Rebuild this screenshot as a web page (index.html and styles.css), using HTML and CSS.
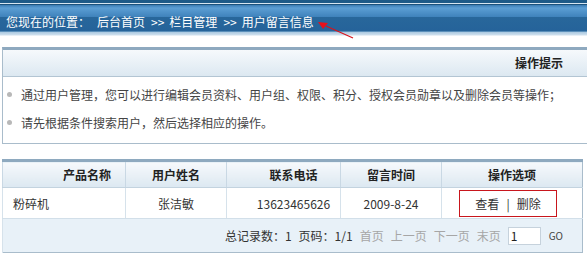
FILE: index.html
```html
<!DOCTYPE html>
<html lang="zh-CN">
<head>
  <meta charset="UTF-8" />
  <title>用户留言信息</title>
  <link rel="stylesheet" href="styles.css">
</head>
<body>
  <div class="topbar">
    <span class="crumb-label">您现在的位置：</span>
    <a class="crumb">后台首页</a>
    <span class="sep">&gt;&gt;</span>
    <a class="crumb">栏目管理</a>
    <span class="sep">&gt;&gt;</span>
    <a class="crumb">用户留言信息</a>
    <svg class="pointer" width="44" height="26" viewBox="0 0 44 26">
      <polygon points="2,5 12,6 7,12" fill="#e8101a" />
      <line x1="10" y1="9" x2="37" y2="21" stroke="#d8141c" stroke-width="1.2" />
    </svg>
  </div>

  <div class="tips">
    <div class="tips-head">操作提示</div>
    <ul class="tips-list">
      <li>通过用户管理，您可以进行编辑会员资料、用户组、权限、积分、授权会员勋章以及删除会员等操作；</li>
      <li>请先根据条件搜索用户，然后选择相应的操作。</li>
    </ul>
  </div>

  <table class="grid">
    <colgroup>
      <col class="w-name">
      <col class="w-user">
      <col class="w-phone">
      <col class="w-time">
      <col class="w-ops">
    </colgroup>
    <thead>
      <tr>
        <th class="col-name">产品名称</th>
        <th>用户姓名</th>
        <th class="col-phone">联系电话</th>
        <th>留言时间</th>
        <th>操作选项</th>
      </tr>
    </thead>
    <tbody>
      <tr>
        <td class="col-name">粉碎机</td>
        <td>张洁敏</td>
        <td class="col-phone">13623465626</td>
        <td>2009-8-24</td>
        <td><span class="ops-box"><a>查看</a><span class="bar">|</span><a>删除</a></span></td>
      </tr>
      <tr class="pager-row">
        <td colspan="5">
          <div class="pager">
            <span>总记录数：1</span>
            <span>页码：1/1</span>
            <span class="off">首页</span>
            <span class="off">上一页</span>
            <span class="off">下一页</span>
            <span class="off">末页</span>
            <input class="page-input" type="text" value="1">
            <span class="go">GO</span>
          </div>
        </td>
      </tr>
    </tbody>
  </table>
</body>
</html>
```

FILE: styles.css
```css
body {
  margin: 0;
  font-family: "Noto Sans CJK SC", "DejaVu Sans", sans-serif;
  font-size: 12px;
  color: #333;
  background: #fff;
  overflow: hidden;
}

.topbar {
  position: relative;
  height: 36px;
  display: flex;
  align-items: center;
  padding: 6px 0 0 6px;
  box-sizing: border-box;
  color: #fff;
  font-size: 12px;
  background: linear-gradient(to bottom,
    #1d5a88 0, #1d5a88 3px,
    #d6e6f2 3px, #d6e6f2 4px,
    #1b527d 4px, #1b527d 5px,
    #3a7cb4 5px, #5b9ed4 8px, #3f82bb 17px,
    #28679b 17px, #25639a 31px,
    #5a8fba 31px, #5a8fba 32px,
    #a9c8e0 32px, #cfe0ee 35px, #fff 36px);
}

.crumb-label {
  margin-right: 7px;
}

.crumb {
  color: #fff;
}

.sep {
  margin: 0 5px 0 6px;
}

.pointer {
  position: absolute;
  left: 316px;
  top: 17px;
}

.tips {
  margin: 11px -10px 0 2px;
  border: 1px solid #a9bccb;
  border-top: 3px solid #8ea9bf;
  border-right: none;
}

.tips-head {
  height: 26px;
  line-height: 26px;
  padding-right: 34px;
  text-align: right;
  font-weight: bold;
  color: #222;
  background: linear-gradient(to bottom, #f6f9fc, #dce8f1);
  border-bottom: 1px solid #b3c5d3;
}

.tips-list {
  list-style: none;
  margin: 0;
  padding: 3px 0 7px 0;
}

.tips-list li {
  display: flex;
  align-items: center;
  height: 28px;
  color: #444;
}

.tips-list li::before {
  content: "";
  width: 5px;
  height: 5px;
  border-radius: 50%;
  background: #b8b8b8;
  margin: 0 9px 0 4px;
}

.grid {
  margin: 15px 0 0 2px;
  width: 580px;
  table-layout: fixed;
  border-collapse: collapse;
  border: 1px solid #a9bccb;
  border-top: 3px solid #8ea9bf;
}

.w-name { width: 123px; }
.w-user { width: 101px; }
.w-phone { width: 114px; }
.w-time { width: 101px; }
.w-ops { width: 141px; }

.grid th {
  height: 25px;
  padding: 0;
  font-weight: bold;
  color: #222;
  background: linear-gradient(to bottom, #f6f9fc, #dce8f1);
  border-left: 1px solid #c9d8e4;
  border-bottom: 1px solid #c3d3df;
}

.grid td {
  height: 30px;
  padding: 0;
  text-align: center;
  border-left: 1px solid #d6e2eb;
  border-bottom: 1px solid #d2dfe9;
}

.grid th.col-name {
  text-align: right;
  padding-right: 14px;
}

.grid td.col-name {
  text-align: left;
  padding-left: 10px;
}

.grid .col-phone {
  padding-left: 20px;
}

.ops-box {
  display: inline-flex;
  align-items: center;
  justify-content: center;
  width: 96px;
  height: 25px;
  margin-right: 8px;
  border: 1px solid #c8161d;
  color: #333;
}

.bar {
  margin: 0 7px;
}

.pager-row td {
  height: 33px;
  background: #e8f1f8;
  border-bottom: none;
}

.pager {
  display: flex;
  align-items: center;
  justify-content: flex-end;
  gap: 7px;
  padding-right: 19px;
  color: #333;
}

.pager .off {
  color: #a6a6a6;
}

.page-input {
  width: 27px;
  height: 16px;
  padding: 0 2px;
  margin-right: 1px;
  border: 1px solid #c6d2dc;
  font: 12px "Noto Sans CJK SC", sans-serif;
  color: #222;
}

.go {
  font-size: 10px;
  color: #444;
}
```
